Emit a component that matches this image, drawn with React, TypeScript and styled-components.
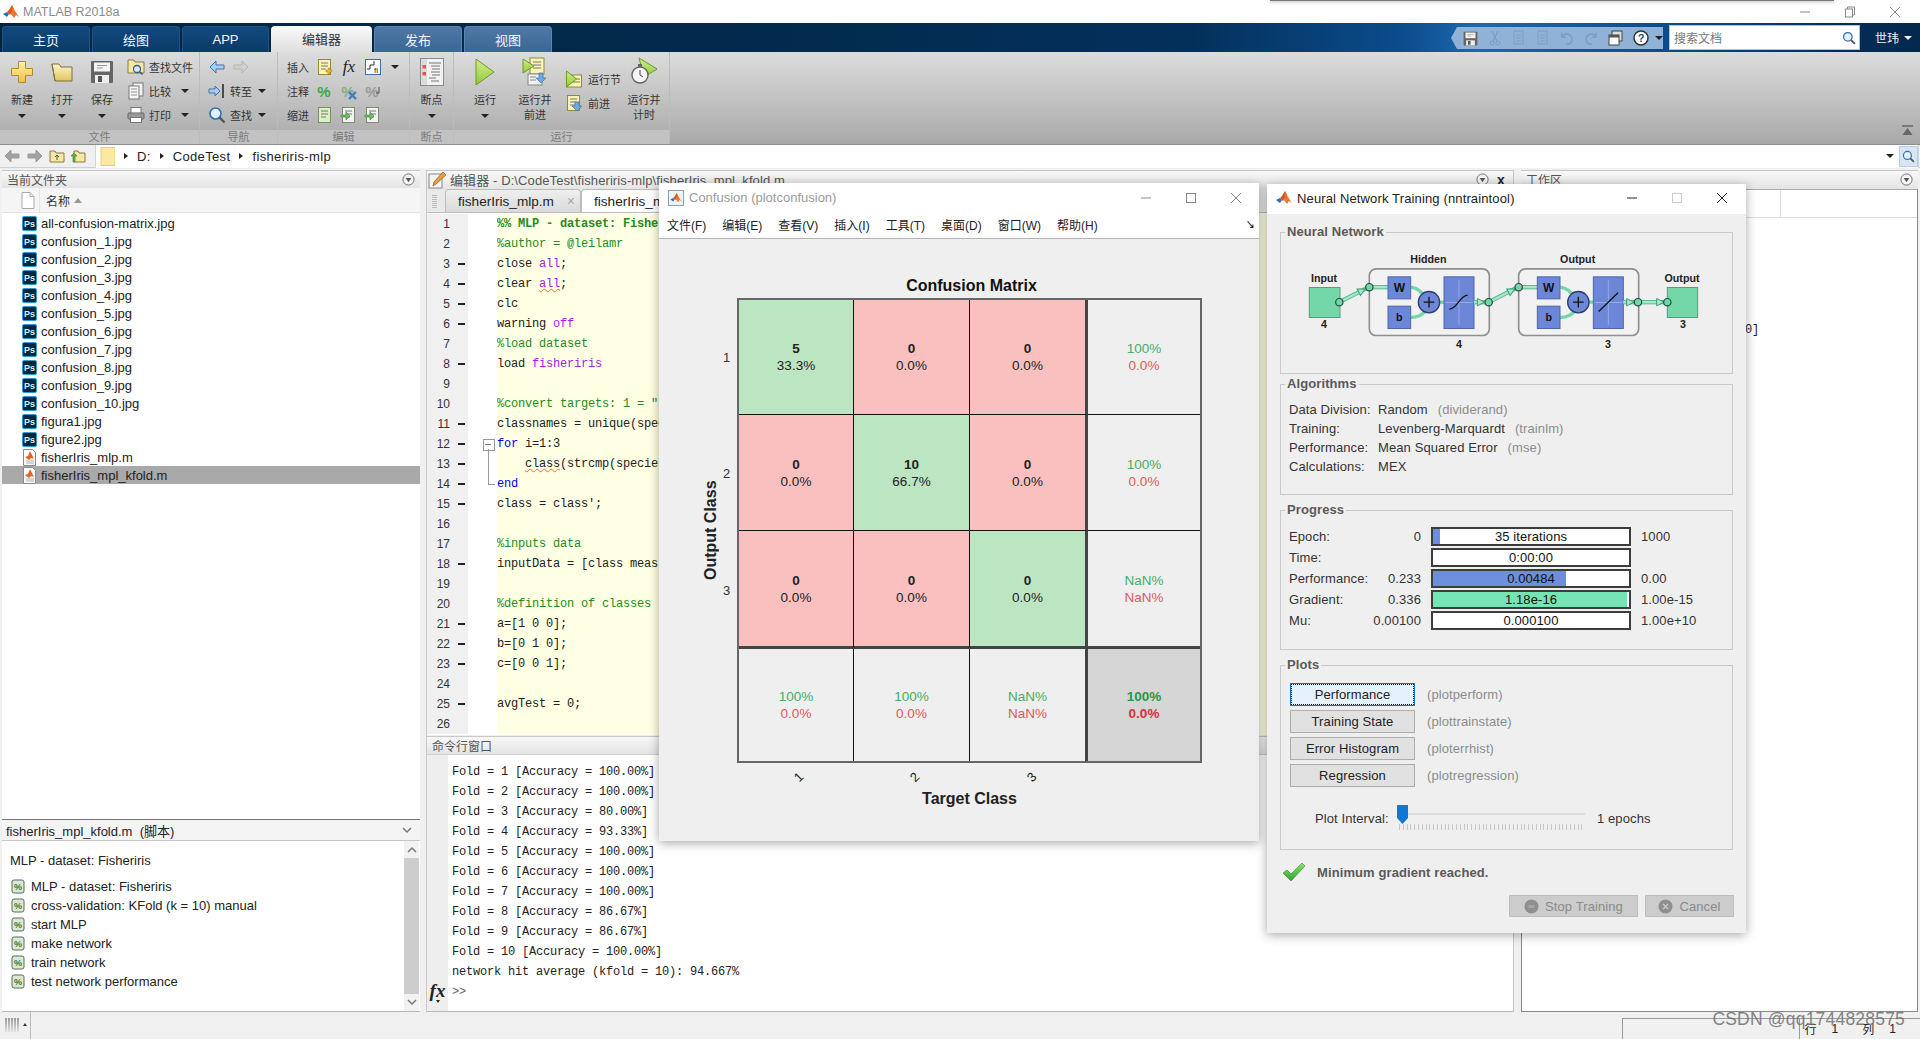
import React from "react";
import styled, { createGlobalStyle, css } from "styled-components";

const SANS = `"Liberation Sans","Noto Sans CJK SC",sans-serif`;
const MONO = `"Liberation Mono","Noto Sans CJK SC",monospace`;

const Global = createGlobalStyle`
  html, body { margin: 0; padding: 0; background: #f0f0f0; }
  body { overflow: hidden; font-family: ${SANS}; font-size: 13px; color: #222; }
  * { box-sizing: border-box; }
`;

const Screen = styled.div`
  position: relative; width: 1920px; height: 1039px; overflow: hidden;
  display: flex; flex-direction: column; background: #f0f0f0;
`;
const Defs = styled.svg`position: absolute; width: 0; height: 0;`;
const TopShade = styled.div`
  position: absolute; left: 1270px; top: 0; width: 564px; height: 1px; background: #777;
  box-shadow: 0 1px 3px rgba(0,0,0,.45);
`;

/* ------- title bar ------- */
const TitleBar = styled.div`
  height: 23px; background: #fff; display: flex; align-items: center; padding-left: 3px; gap: 4px;
`;
const AppName = styled.span`font-size: 12.5px; color: #8a8a8a;`;
const WinCtrls = styled.div`margin-left: auto; display: flex; gap: 33px; padding-right: 19px; align-items: center;`;

/* ------- tabs ------- */
const TabBar = styled.div`
  height: 29px; display: flex; align-items: flex-end; padding-left: 2px; gap: 2px;
  background: linear-gradient(90deg,#02233f 0,#032a4d 38%,#03305a 62%,#0b4c8b 73%,#1c69b0 77%,#0c4f90 86%,#042d58 96%,#03284d 100%);
`;
const Tab = styled.div<{ $w: number; $kind: "dark" | "light" | "active" }>`
  width: ${p => p.$w}px; height: 26px; padding-bottom: 1px;
  border-radius: 4px 4px 0 0; display: flex; align-items: center; justify-content: center; font-size: 13px;
  ${p => p.$kind === "dark" && css`background: linear-gradient(#11497e,#0b3b69); color: #f3f6fa; border: 1px solid #1d5587; border-bottom: 0;`}
  ${p => p.$kind === "light" && css`background: linear-gradient(#4f78a5,#3a6795); color: #f3f6fa; border: 1px solid #5d83ac; border-bottom: 0;`}
  ${p => p.$kind === "active" && css`background: linear-gradient(#fafafa,#dedede); color: #333;`}
`;
const Qat = styled.div`
  margin-left: auto; height: 22px; width: 212px; margin-bottom: 3px; background: #8fb2d6; display: flex; align-items: center;
  padding-left: 12px; gap: 10px; clip-path: polygon(6px 0,100% 0,100% 100%,6px 100%,0 50%);
`;
const QatCaret = styled.span`display: flex; margin-left: -4px;`;
const SearchBox = styled.div`
  width: 191px; height: 25px; margin: 0 0 2px 4px; background: #fff; border: 1px solid #a9c4df; display: flex; align-items: center;
  justify-content: space-between; padding: 0 3px 0 4px; font-size: 12px; color: #777;
`;
const UserMenu = styled.div`
  width: 58px; height: 25px; margin-bottom: 2px; display: flex; align-items: center; padding-left: 13px; gap: 5px; color: #f0f4f8; font-size: 12px;
`;

/* ------- toolstrip ------- */
const Toolstrip = styled.div`
  height: 93px; display: flex; background: linear-gradient(#dcdcdc,#a9a9a9); border-bottom: 1px solid #8d8d8d;
`;
const Section = styled.div<{ $w: number }>`
  width: ${p => p.$w}px; height: 100%; display: flex; flex-direction: column; border-right: 1px solid #bcbcbc;
`;
const SectionBody = styled.div<{ $pl?: number }>`
  height: 78px; display: flex; padding-left: ${p => p.$pl ?? 0}px;
`;
const SectionLabel = styled.div`
  height: 14px; line-height: 14px; text-align: center; font-size: 11px; color: #7b7b7b; background: #c2c2c2;
`;
const EndSection = styled.div`
  flex: 1; display: flex; align-items: flex-end; justify-content: flex-end; padding: 0 7px 8px 0;
`;
const Big = styled.div<{ $w?: number }>`
  width: ${p => p.$w ?? 40}px; display: flex; flex-direction: column; align-items: center; flex: none;
`;
const BigIcon = styled.div`height: 40px; display: flex; align-items: center; justify-content: center;`;
const BigText = styled.div`height: 16px; line-height: 16px; font-size: 11px; color: #333; white-space: nowrap;`;
const BigLast = styled(BigText)`height: 15px; line-height: 15px; display: flex; align-items: center; justify-content: center;`;
const Caret = styled.span<{ $c?: string }>`
  display: inline-block; width: 0; height: 0; flex: none;
  border-left: 4px solid transparent; border-right: 4px solid transparent; border-top: 4px solid ${p => p.$c ?? "#222"};
`;
const SmallCol = styled.div<{ $ml?: number; $pt?: number; $w?: number }>`
  margin-left: ${p => p.$ml ?? 0}px; padding-top: ${p => p.$pt ?? 3}px; width: ${p => p.$w ?? 70}px; flex: none;
`;
const SmallRow = styled.div<{ $gap?: number }>`
  height: 24px; display: flex; align-items: center; gap: ${p => p.$gap ?? 4}px; font-size: 11px; color: #333; white-space: nowrap;
`;
const SmallText = styled.span<{ $w: number }>`display: inline-block; min-width: ${p => p.$w}px;`;
const EditGrid = styled.div`
  padding: 3px 0 0 9px; display: grid; grid-template-columns: 26px 24px 24px 24px 20px; grid-auto-rows: 24px; align-items: center; justify-items: center;
  font-size: 11px; color: #333;
`;
const EditWord = styled.span`justify-self: start; white-space: nowrap;`;

/* ------- address ------- */
const AddressBar = styled.div`
  height: 23px; display: flex; align-items: center; padding: 0 1px 0 3px; background: #f0f0f0; border-bottom: 1px solid #d0d0d0;
`;
const NavIcons = styled.div`display: flex; align-items: center; gap: 5px; width: 92px; flex: none;`;
const PathBox = styled.div`
  flex: 1; height: 23px; background: #fff; border: 1px solid #d5d5d5; border-width: 0 1px; display: flex; align-items: center; padding-left: 4px; gap: 9px;
  font-size: 13px; letter-spacing: .35px; color: #222;
`;
const PathArrow = styled.span`
  width: 0; height: 0; border-top: 3.5px solid transparent; border-bottom: 3.5px solid transparent; border-left: 4px solid #222;
`;
const PathEnd = styled.div`margin-left: auto; display: flex; align-items: center; gap: 5px; height: 100%; `;
const PathSearch = styled.div`
  width: 19px; height: 21px; background: #d8e6f4; border: 1px solid #b8cde2; display: flex; align-items: center; justify-content: center;
`;

/* ------- desk ------- */
const Desk = styled.div`height: 844px; display: flex; padding: 2px 2px 0 2px;`;
const LeftCol = styled.div`width: 418px; display: flex; flex-direction: column; flex: none;`;
const CenterCol = styled.div`width: 1088px; margin-left: 6px; display: flex; flex-direction: column; flex: none; border-left: 1px solid #c8c8c8; border-right: 1px solid #c8c8c8;`;
const RightCol = styled.div`width: 397px; margin-left: 7px; display: flex; flex-direction: column; flex: none;`;

const PanelHead = styled.div<{ $h?: number }>`
  height: ${p => p.$h ?? 18}px; flex: none; display: flex; align-items: center; padding: 0 5px 1px; gap: 6px; font-size: 12px; color: #555;
  background: linear-gradient(#f8f8f8,#e4e4e4); border-top: 1px solid #c8c8c8;
`;
const EditorHead = styled(PanelHead)`padding: 0 8px 2px 1px; gap: 4px; font-size: 13px; letter-spacing: .1px;`;
const HeadRight = styled.div`margin-left: auto; display: flex; align-items: center; gap: 8px;`;
const HeadX = styled.span`font-size: 14px; font-weight: bold; color: #222;`;

const ColumnHead = styled.div`
  height: 25px; flex: none; display: flex; align-items: center; background: #f5f5f5; border-bottom: 1px solid #e3e3e3; font-size: 12px; color: #333;
`;
const ColIcon = styled.div`width: 38px; height: 100%; display: flex; align-items: center; justify-content: flex-end; padding-right: 4px; border-right: 1px solid #e4e4e4; margin-right: 6px;`;
const SortUp = styled.span`
  width: 0; height: 0; margin-left: 4px; border-left: 4px solid transparent; border-right: 4px solid transparent; border-bottom: 5px solid #999;
`;
const FileList = styled.div`height: 606px; flex: none; padding-top: 1px; background: #fff;`;
const FileRow = styled.div<{ $sel?: boolean }>`
  height: 18px; display: flex; align-items: center; padding-left: 20px; gap: 4px; font-size: 13px; color: #222;
  background: ${p => (p.$sel ? "#a9a9a9" : "transparent")};
`;
const DetailHead = styled.div`
  height: 22px; flex: none; display: flex; align-items: center; justify-content: space-between; padding: 0 8px 0 4px; font-size: 13px;
  background: #f4f4f4; border-top: 1px solid #777; border-bottom: 1px solid #c5c5c5;
`;
const Detail = styled.div`flex: 1; display: flex; background: #fff; border-bottom: 1px solid #b8b8b8; min-height: 0;`;
const DetailBody = styled.div`flex: 1; padding: 10px 0 0 8px;`;
const DetailTitle = styled.div`height: 19px; line-height: 19px; font-size: 13px;`;
const OutlineList = styled.div`margin-top: 7px;`;
const OutlineRow = styled.div`height: 19px; display: flex; align-items: center; gap: 5px; padding-left: 1px; font-size: 13px;`;
const ScrollBar = styled.div`width: 15px; margin-right: 1px; display: flex; flex-direction: column; align-items: center; background: #f2f2f2;`;
const ScrollCap = styled.div`height: 17px; display: flex; align-items: center; justify-content: center;`;
const ScrollThumb = styled.div`flex: 1; width: 100%; background: #cdcdcd;`;

/* ------- editor ------- */
const EditorTabs = styled.div`
  height: 23px; flex: none; display: flex; align-items: flex-end; padding-left: 18px; background: #e9e9e9; position: relative;
  border-bottom: 1px solid #bdbdbd;
`;
const Grip = styled.div`
  position: absolute; left: 5px; top: 5px; width: 5px; height: 14px;
  background: repeating-linear-gradient(#bbb 0 1px, transparent 1px 2px);
`;
const EdTab = styled.div<{ $on?: boolean }>`
  height: 23px; width: ${p => (p.$on ? 140 : 136)}px; display: flex; align-items: center; padding-left: 12px;
  font-size: 13.6px; color: #222; border: 1px solid #bbb; border-bottom: 0; border-radius: 4px 4px 0 0; position: relative;
  background: ${p => (p.$on ? "#fff" : "linear-gradient(#efefef,#dadada)")};
`;
const TabClose = styled.span`position: absolute; right: 5px; top: 3px; color: #a8a8a8; font-size: 14px;`;
const Code = styled.div`height: 522px; flex: none; overflow: hidden; background: #fff; position: relative; padding-top: 1px;`;
const CodeBack = styled.div`display: flex; flex-direction: column;`;
const Line = styled.div`
  height: 20px; display: grid; grid-template-columns: 28px 13px 29px 1fr; align-items: center;
`;
const LineNo = styled.div`
  height: 100%; background: #f0f0f0; text-align: right; padding-right: 5px; font: 12px/20px ${SANS}; color: #333;
`;
const LineDash = styled.div`height: 100%; background: #f0f0f0; display: flex; align-items: center; justify-content: center;`;
const DashMark = styled.span`width: 7px; height: 1.5px; background: #222;`;
const FoldCell = styled.div<{ $kind?: "open" | "mid" | "end" }>`
  height: 100%; background: #fff; position: relative;
  ${p => p.$kind === "open" && css`
    &::before { content: ""; position: absolute; left: 15px; top: 5px; width: 10px; height: 10px; border: 1px solid #999; background: #fff; }
    &::after { content: ""; position: absolute; left: 17px; top: 10px; width: 6px; height: 1px; background: #777; }
  `}
  ${p => p.$kind === "mid" && css`&::before { content: ""; position: absolute; left: 20px; top: -5px; bottom: 0; width: 1px; background: #999; }`}
  ${p => p.$kind === "end" && css`&::before { content: ""; position: absolute; left: 20px; top: 0; height: 10px; width: 6px; border-left: 1px solid #999; border-bottom: 1px solid #999; }`}
`;
const CodeText = styled.div`height: 100%; background: #ffffe4;`;
const CodeClip = styled.div`
  width: 162px; height: 100%; overflow: hidden; font: 12px/20px ${MONO}; letter-spacing: -.2px; white-space: pre; color: #222;
`;
const Cmt = styled.span<{ $b?: boolean }>`color: #228b22; font-weight: ${p => (p.$b ? "bold" : "normal")};`;
const Kw = styled.span`color: #0000ff;`;
const Str = styled.span`color: #a020f0;`;
const Warn = styled.span`text-decoration: underline wavy #e8741a 1px;`;

const CmdHead = styled(PanelHead)`margin-top: 1px; padding-left: 5px;`;
const Cmd = styled.div`flex: 1; display: flex; background: #fff; border-bottom: 1px solid #b8b8b8; border-top: 1px solid #d0d0d0;`;
const FxGutter = styled.div`width: 21px; flex: none; background: #eeeeee; display: flex; flex-direction: column; align-items: center; justify-content: flex-end; padding-bottom: 8px;`;
const FxMark = styled.span`font: italic bold 19px/18px "Liberation Serif",serif; color: #222;`;
const FxCaret = styled.span`
  width: 0; height: 0; border-left: 2.5px solid transparent; border-right: 2.5px solid transparent; border-top: 3px solid #222;
`;
const CmdBody = styled.div`flex: 1; padding: 7px 0 0 4px; font: 12px/20px ${MONO}; letter-spacing: -.2px; white-space: pre; color: #222;`;
const Prompt = styled.div`color: #666;`;

/* ------- workspace ------- */
const WsTable = styled.div`flex: 1; background: #fff; border: 1px solid #888; border-top-color: #aaa;`;
const WsHeader = styled.div`height: 28px; display: grid; grid-template-columns: 259px 1fr; border-bottom: 1px solid #ddd;`;
const WsCell = styled.div`border-right: 1px solid #ddd;`;
const WsValue = styled.div`padding: 102px 0 0 223px; font: 12px/20px ${MONO}; letter-spacing: -.2px;`;

/* ------- status ------- */
const StatusBar = styled.div`
  height: 27px; flex: none; display: flex; background: #f0f0f0; align-items: center; position: relative;
`;
const StatusGrip = styled.div`
  width: 31px; height: 100%; margin-right: auto; padding: 6px 0 0 5px; border-right: 1px solid #bbb; display: flex; gap: 1px;
`;
const GripBar = styled.span`width: 2px; height: 14px; background: linear-gradient(#999,#e0e0e0);`;
const GripCaret = styled.span`
  width: 0; height: 0; margin: 5px 0 0 3px; border-left: 2.5px solid transparent; border-right: 2.5px solid transparent; border-bottom: 3px solid #333;
`;
const StatusCells = styled.div`
  width: 298px; height: 21px; margin-top: 6px; display: flex; border-top: 1px solid #999; font-size: 12px;
`;
const StatusSlot = styled.div`width: 181px; height: 100%; border-left: 1px solid #999;`;
const StatusPos = styled.div`
  flex: 1; border-left: 1px solid #999; display: flex; align-items: center; padding: 0 0 1px 5px; color: #222;
`;
const PosVal = styled.span`margin: 0 24px 0 15px;`;
const Watermark = styled.div`
  position: absolute; right: 15px; bottom: 9px; font: 17.5px ${SANS}; color: rgba(110,110,110,.85); letter-spacing: .2px; white-space: nowrap;
`;

/* ------- floating windows ------- */
const Win = styled.div<{ $x: number; $y: number; $w: number; $h: number }>`
  position: absolute; left: ${p => p.$x}px; top: ${p => p.$y}px; width: ${p => p.$w}px; height: ${p => p.$h}px;
  background: #efefef; box-shadow: 0 2px 10px rgba(0,0,0,.35); display: flex; flex-direction: column;
`;
const WinTitle = styled.div<{ $h: number; $dim?: boolean }>`
  height: ${p => p.$h}px; flex: none; background: #fff; display: flex; align-items: center; padding-left: 9px; gap: 5px; font-size: 13px;
  color: ${p => (p.$dim ? "#9a9a9a" : "#222")};
`;
const NnTitle = styled(WinTitle)`padding-bottom: 2px; letter-spacing: .14px;`;
const WinBtns = styled.div<{ $gap: number; $pr: number }>`margin-left: auto; display: flex; align-items: center; gap: ${p => p.$gap}px; padding-right: ${p => p.$pr}px;`;

const MenuBar = styled.div`
  height: 27px; flex: none; background: #fff; border-bottom: 1px solid #b5b5b5; display: flex; align-items: center; padding: 0 0 2px 8px; gap: 16px; font-size: 12px; color: #222;
`;
const MenuEnd = styled.span`margin-left: auto; margin-right: 4px; font-size: 9px; font-weight: bold;`;
const Plot = styled.div`flex: 1; display: flex; flex-direction: column;`;
const PlotTitle = styled.div`
  margin: 37px 0 2px 80px; width: 465px; height: 20px; line-height: 20px; text-align: center; font: bold 16px/20px ${SANS}; color: #111;
`;
const PlotRow = styled.div`display: flex; padding-left: 42px;`;
const YLabel = styled.div`
  width: 20px; writing-mode: vertical-rl; transform: rotate(180deg); text-align: center; font: bold 16px/20px ${SANS}; color: #222;
`;
const YTicks = styled.div`width: 16px; display: grid; grid-template-rows: repeat(4,116.25px);`;
const YTick = styled.div`font-size: 13px; color: #333; padding-top: 52px; text-align: left; padding-left: 2px;`;
const Matrix = styled.div`
  width: 465px; height: 465px; display: grid; grid-template-columns: 115px 116px 118px 112px; grid-template-rows: 115px 116px 118px 112px;
  border: 2px solid #666;
`;
const tones = { good: "#bce5c2", bad: "#f9c0bf", sum: "#efefef", total: "#d6d6d6" } as const;
const Cell = styled.div<{ $tone: keyof typeof tones; $c: number; $r: number }>`
  background: ${p => tones[p.$tone]}; display: flex; flex-direction: column; align-items: center; justify-content: center;
  font-size: 13.5px; line-height: 17px; color: #222;
  border-right: ${p => (p.$c === 3 ? "0" : p.$c === 2 ? "3px solid #444" : "1.5px solid #111")};
  border-bottom: ${p => (p.$r === 3 ? "0" : p.$r === 2 ? "3px solid #444" : "1.5px solid #111")};
`;
const Count = styled.b`font-size: 13.5px;`;
const Hit = styled.span<{ $strong?: boolean }>`color: ${p => (p.$strong ? "#1f9a45" : "#45ad66")}; font-weight: ${p => (p.$strong ? "bold" : "normal")};`;
const Miss = styled.span<{ $strong?: boolean }>`color: ${p => (p.$strong ? "#d8303a" : "#d95a5e")}; font-weight: ${p => (p.$strong ? "bold" : "normal")};`;
const XTicks = styled.div`margin-left: 78px; width: 465px; display: grid; grid-template-columns: 117px 116px 118px 114px; height: 26px; padding-top: 5px;`;
const XTick = styled.div`
  text-align: center; font-size: 13px; line-height: 18px; transform: translateX(4px) rotate(-45deg); color: #222; justify-self: center; width: 16px;
`;
const XLabel = styled.div`margin-left: 78px; width: 465px; text-align: center; font: bold 16px/20px ${SANS}; color: #222;`;

const NnBody = styled.div`flex: 1; padding: 10px 13px 0; display: flex; flex-direction: column; letter-spacing: .1px;`;
const Group = styled.fieldset<{ $h: number; $mt?: number }>`
  margin: ${p => p.$mt ?? 0}px 0 0 0; padding: 0; height: ${p => p.$h}px; min-width: 0; border: 1px solid #c9c9c9; flex: none;
`;
const Legend = styled.legend`margin-left: 4px; padding: 0 2px; font: bold 13px/16px ${SANS}; color: #5a5a5a;`;
const Diagram = styled.svg`display: block;`;
const AlgoGrid = styled.div`
  padding: 8px 0 0 8px; display: grid; grid-template-columns: 89px 1fr; grid-auto-rows: 19px; align-items: center; font-size: 13px; color: #333;
`;
const Note = styled.span`color: #8c8c8c; margin-left: 10px;`;
const ProgList = styled.div`padding-top: 8px;`;
const ProgRow = styled.div`height: 21px; display: flex; align-items: center; padding-left: 8px; font-size: 13px; color: #333;`;
const ProgLabel = styled.div`width: 80px;`;
const ProgStart = styled.div`width: 52px; text-align: right;`;
const ProgBar = styled.div`
  width: 200px; height: 19px; margin: 0 10px; border: 2px solid #3c3c3c; background: #fff; position: relative; color: #111;
`;
const ProgFill = styled.div<{ $green?: boolean }>`height: 100%; background: ${p => (p.$green ? "#76e4b4" : "#6d8ddf")};`;
const ProgText = styled.div`position: absolute; inset: 0; text-align: center; line-height: 15px;`;
const PlotBtns = styled.div`padding: 10px 0 0 9px; display: grid; grid-template-columns: 125px 1fr; grid-auto-rows: 23px; row-gap: 4px; align-items: center;`;
const PlotBtn = styled.div<{ $focus?: boolean }>`
  height: 23px; display: flex; align-items: center; justify-content: center; font-size: 13px; color: #222;
  background: ${p => (p.$focus ? "#e5f1fb" : "#e1e1e1")}; border: 1px solid ${p => (p.$focus ? "#0078d7" : "#adadad")};
  ${p => p.$focus && css`outline: 1px dotted #111; outline-offset: -2px;`}
`;
const PlotNote = styled.span`margin-left: 12px; font-size: 13px; color: #8c8c8c;`;
const SliderRow = styled.div`display: flex; align-items: flex-start; padding: 0 0 0 34px; margin-top: 18px; font-size: 13px; color: #333;`;
const SliderLabel = styled.div`width: 82px; line-height: 28px;`;
const SliderTrack = styled.div`width: 188px; height: 27px; position: relative; margin-right: 12px;`;
const SliderRail = styled.div`position: absolute; left: 0; right: 0; top: 8px; height: 2px; background: #dcdcdc;`;
const SliderThumb = styled.svg`position: absolute; left: 0; top: 0;`;
const SliderTicks = styled.div`
  position: absolute; left: 2px; right: 0; top: 19px; height: 6px;
  background: repeating-linear-gradient(90deg,#c8c8c8 0 1px,transparent 1px 3.8px);
`;
const SliderValue = styled.div`line-height: 28px;`;
const Result = styled.div`margin: 10px 0 0 2px; height: 24px; display: flex; align-items: center; gap: 11px; font: bold 13px ${SANS}; color: #5a5a5a;`;
const Actions = styled.div`margin: 11px -1px 0 0; display: flex; justify-content: flex-end; gap: 7px;`;
const GrayBtn = styled.div<{ $w: number }>`
  width: ${p => p.$w}px; height: 22px; background: #cccccc; border: 1px solid #bdbdbd; display: flex; align-items: center; justify-content: center; gap: 6px;
  font-size: 13px; color: #8a8a8a;
`;

/* ------- icons ------- */
type S = { s?: number };
const PEAK = (
  <>
    <path d="M0 10l4-2 2 2-2 3z" fill="#2a6fb5" />
    <path d="M4 8l2-2 3-5 2 4-4 6-1-1z" fill="#d9541e" />
    <path d="M9 1l3 6 4 6-3-2-2 3-3-4 1-3z" fill="#e8762b" />
  </>
);
const Logo = ({ s = 16 }: S) => <svg width={s} height={s} viewBox="0 0 16 16">{PEAK}</svg>;
const FramedLogo = () => (
  <svg width="16" height="16" viewBox="0 0 16 16">
    <rect x=".5" y=".5" width="15" height="15" fill="#eef3f8" stroke="#8d9fb3" />
    <g transform="translate(2.4 2.4) scale(.7)">{PEAK}</g>
  </svg>
);
const Plus = () => (
  <svg width="24" height="24" viewBox="0 0 24 24"><path d="M8.500 1.500h7v7h7v7h-7v7h-7v-7h-7v-7h7z" fill="url(#gY)" stroke="#b68a28" /></svg>
);
const Folder = ({ s = 24 }: S) => (
  <svg width={s} height={s} viewBox="0 0 24 24"><path d="M2 4h7l2 3h11v14H5z" fill="url(#gF)" stroke="#7f6f3a" /><path d="M2 4l3 17" stroke="#7f6f3a" fill="none" /></svg>
);
const Floppy = ({ s = 24 }: S) => (
  <svg width={s} height={s} viewBox="0 0 24 24"><rect x="1" y="1" width="22" height="22" rx="1" fill="#666" /><rect x="4" y="2.500" width="16" height="9" fill="#f4f4f4" /><path d="M7 5.500h10M7 8h6" stroke="#999" /><rect x="5" y="15" width="14" height="8" fill="#efefef" /><rect x="8" y="16" width="4" height="6" fill="#555" /></svg>
);
const FindFile = () => (
  <svg width="18" height="18" viewBox="0 0 18 18"><path d="M1 2h6l1 2h9v11H1z" fill="#f5e7a6" stroke="#8c7a40" /><circle cx="10" cy="11" r="3.500" fill="#d8ecff" stroke="#355a85" strokeWidth="1.300" /><path d="M12.500 13.500l3 3" stroke="#355a85" strokeWidth="1.600" /></svg>
);
const Compare = () => (
  <svg width="18" height="18" viewBox="0 0 18 18"><rect x="6" y="1" width="10" height="13" fill="#f4f4f4" stroke="#777" /><rect x="2" y="4" width="10" height="13" fill="#fafafa" stroke="#777" /><path d="M4 7h6M4 10h6M4 13h6" stroke="#888" /></svg>
);
const Printer = () => (
  <svg width="18" height="18" viewBox="0 0 18 18"><rect x="4" y="1.500" width="10" height="6" fill="#fafafa" stroke="#777" /><rect x="1" y="7" width="16" height="6" rx="1" fill="#9a9a9a" stroke="#666" /><rect x="3.500" y="11.500" width="11" height="5" fill="#fff" stroke="#777" /></svg>
);
type Arrow = { on?: boolean; s?: number; dark?: boolean };
const ArrowFill = (on?: boolean, dark?: boolean) => (dark ? "#a2a2a2" : on ? "#a8cdf0" : "#cfcfcf");
const ArrowLine = (on?: boolean, dark?: boolean) => (dark ? "#9a9a9a" : on ? "#3d75ad" : "#b5b5b5");
const ArrowL = ({ on = true, s = 18, dark }: Arrow) => (
  <svg width={s} height={s} viewBox="0 0 18 18"><path d="M8 3L2 9l6 6v-4h8V7H8z" fill={ArrowFill(on, dark)} stroke={ArrowLine(on, dark)} /></svg>
);
const ArrowR = ({ on = false, s = 18, dark }: Arrow) => (
  <svg width={s} height={s} viewBox="0 0 18 18"><path d="M10 3l6 6-6 6v-4H2V7h8z" fill={ArrowFill(on, dark)} stroke={ArrowLine(on, dark)} /></svg>
);
const GoTo = () => (
  <svg width="18" height="18" viewBox="0 0 18 18"><path d="M7 4l5 5-5 5v-3H1V7h6z" fill="#a8cdf0" stroke="#3d75ad" /><path d="M15 2v14" stroke="#222" strokeWidth="1.500" /></svg>
);
const Glass = ({ s = 18, c = "#2f6fb0" }: { s?: number; c?: string }) => (
  <svg width={s} height={s} viewBox="0 0 18 18"><circle cx="7.500" cy="7.500" r="5.500" fill="#e2f1ff" stroke={c} strokeWidth="1.600" /><path d="M11.500 11.500l5 5" stroke="#555" strokeWidth="2.400" /></svg>
);
const Doc = ({ fill = "#fbf3b5", stroke = "#8c8c3a" }: { fill?: string; stroke?: string }) => (
  <><rect x="2.500" y="1.500" width="12" height="15" fill={fill} stroke={stroke} /><path d="M5 5h7M5 8h7M5 11h5" stroke="#777" /></>
);
const InsertDoc = () => (
  <svg width="18" height="18" viewBox="0 0 18 18"><Doc /><path d="M12 10h2v2h2v2h-2v2h-2v-2h-2v-2h2z" fill="#f2b431" stroke="#b27f1c" strokeWidth=".5" /></svg>
);
const FxIcon = () => (<svg width="22" height="18" viewBox="0 0 22 18"><text x="11" y="14" textAnchor="middle" fontFamily="Liberation Serif" fontStyle="italic" fontSize="17" fill="#222">fx</text></svg>);
const FiIcon = () => (
  <svg width="18" height="18" viewBox="0 0 18 18"><rect x="1.500" y="1.500" width="15" height="15" fill="#fff" stroke="#3f6ea5" /><path d="M3 11h3V7h4V3" fill="none" stroke="#333" /><text x="12" y="15" fontFamily="Liberation Sans" fontSize="8" textAnchor="middle" fill="#222">fi</text></svg>
);
const Pct = ({ c = "#3da83c", mark }: { c?: string; mark?: "x" | "arrow" }) => (
  <svg width="18" height="18" viewBox="0 0 18 18"><text x="8" y="15" fontFamily="Liberation Sans" fontWeight="bold" fontSize="15" textAnchor="middle" fill={c}>%</text>
    {mark === "x" && <path d="M9 10l7 7M16 10l-7 7" stroke="#3d7cc0" strokeWidth="2.200" />}
    {mark === "arrow" && <path d="M15 5v6h-3" fill="none" stroke="#555" />}
  </svg>
);
const IndentDoc = ({ tone, arrow }: { tone: string; arrow?: boolean }) => (
  <svg width="18" height="18" viewBox="0 0 18 18"><Doc fill={tone} stroke="#7d8d6a" />{arrow && <path d="M1 9h5V6l4 4-4 4v-3H1z" fill="#69c15c" stroke="#3c8a35" strokeWidth=".6" />}</svg>
);
const BreakIcon = () => (
  <svg width="24" height="28" viewBox="0 0 24 28"><rect x=".5" y=".5" width="23" height="27" fill="#f2f2f2" stroke="#8a8a8a" /><rect x="1" y="1" width="6" height="26" fill="#dcdcdc" /><rect x="2.500" y="7" width="3.500" height="3.500" fill="#e25555" /><rect x="2.500" y="14" width="3.500" height="3.500" fill="#e25555" /><path d="M9 5h12M11 8h9M12 11h8M11 14h9M12 17h8M9 20h7M11 23h8" stroke="#777" /></svg>
);
const RunIcon = () => (
  <svg width="22" height="30" viewBox="0 0 22 30"><path d="M2 2l18 13L2 28z" fill="url(#gG)" stroke="#6c9b25" /></svg>
);
const RunAdvance = () => (
  <svg width="26" height="30" viewBox="0 0 26 30"><rect x="8" y="1" width="14" height="16" fill="#fbf3b5" stroke="#8c8c3a" /><path d="M11 5h8M11 8h8M11 11h8" stroke="#777" /><path d="M1 2l11 7-11 7z" fill="url(#gG)" stroke="#6c9b25" /><rect x="6" y="17" width="14" height="11" fill="#f2f2f2" stroke="#888" /><path d="M8 20h6M8 23h6" stroke="#888" /><path d="M17 16h4v5h3l-5 5-5-5h3z" fill="#6fa9de" stroke="#3c74ab" strokeWidth=".7" /></svg>
);
const RunSection = () => (
  <svg width="18" height="18" viewBox="0 0 18 18"><rect x="1.500" y="5" width="15" height="12" fill="#fbf3b5" stroke="#8c8c3a" /><path d="M7 9h8M7 12h8" stroke="#777" /><path d="M1.500 1l10 8-10 8z" fill="url(#gG)" stroke="#6c9b25" /></svg>
);
const Advance = () => (
  <svg width="18" height="18" viewBox="0 0 18 18"><Doc /><path d="M10 8h4v4h3l-5 5-5-5h3z" fill="#6fa9de" stroke="#3c74ab" strokeWidth=".7" /></svg>
);
const RunTimed = () => (
  <svg width="28" height="30" viewBox="0 0 28 30"><path d="M9 1l18 11-13 8z" fill="url(#gG)" stroke="#6c9b25" /><circle cx="10" cy="18" r="8" fill="#f5f5f5" stroke="#666" strokeWidth="1.400" /><path d="M10 13v5l3 2" fill="none" stroke="#444" /><rect x="8" y="7" width="4" height="3" fill="#666" /></svg>
);
const MiniFloppy = () => <Floppy s={15} />;
const MiniDoc = ({ c = "#7a9fc4" }: { c?: string }) => (
  <svg width="14" height="16" viewBox="0 0 14 16"><rect x="2" y="1" width="9" height="13" fill="none" stroke={c} /><path d="M4 5h5M4 8h5M4 11h5" stroke={c} /></svg>
);
const Scissors = () => (
  <svg width="14" height="16" viewBox="0 0 14 16"><path d="M4 1l5 10M10 1L5 11" stroke="#7a9fc4" strokeWidth="1.300" /><circle cx="4" cy="13" r="2" fill="none" stroke="#7a9fc4" /><circle cx="10" cy="13" r="2" fill="none" stroke="#7a9fc4" /></svg>
);
const UndoIcon = ({ flip }: { flip?: boolean }) => (
  <svg width="14" height="16" viewBox="0 0 14 16" transform={flip ? "scale(-1,1)" : undefined}><path d="M3 6a5 5 0 1 1 3 8" fill="none" stroke="#7a9fc4" strokeWidth="1.600" /><path d="M1 2v6h6z" fill="#7a9fc4" /></svg>
);
const WindowsIcon = () => (
  <svg width="15" height="16" viewBox="0 0 15 16"><rect x="4" y="1" width="10" height="10" fill="#ddd" stroke="#444" /><rect x="1" y="5" width="10" height="10" fill="#fff" stroke="#444" /><rect x="1" y="5" width="10" height="2.500" fill="#555" /></svg>
);
const HelpIcon = () => (
  <svg width="16" height="16" viewBox="0 0 16 16"><circle cx="8" cy="8" r="7" fill="#fff" stroke="#333" strokeWidth="1.500" /><text x="8" y="12" textAnchor="middle" fontFamily="Liberation Sans" fontWeight="bold" fontSize="11" fill="#25507f">?</text></svg>
);
const UpFolder = () => (
  <svg width="16" height="16" viewBox="0 0 16 16"><path d="M1 3h5l1 2h8v9H1z" fill="#f5e7a6" stroke="#8c7a40" /><path d="M8 7v5M6 9l2-2 2 2" fill="none" stroke="#555" /></svg>
);
const BrowseFolder = () => (
  <svg width="16" height="16" viewBox="0 0 16 16"><path d="M4 3h4l1 2h6v9H4z" fill="#f5e7a6" stroke="#8c7a40" /><path d="M1 8l3-3 3 3H5v6H3V8z" fill="#5fb14e" stroke="#2f7d2a" strokeWidth=".6" /></svg>
);
const PathFolder = () => (
  <svg width="15" height="23" viewBox="0 0 15 23"><rect x="1" y="2.500" width="14" height="18" fill="#fbe9a2" stroke="#e5cd7a" /></svg>
);
const Circled = ({ s = 13 }: S) => (
  <svg width={s} height={s} viewBox="0 0 14 14"><circle cx="7" cy="7" r="6" fill="#f5f5f5" stroke="#666" /><path d="M4 5.500h6L7 10z" fill="#555" /></svg>
);
const PageIcon = () => (
  <svg width="14" height="17" viewBox="0 0 14 17"><path d="M1 .5h8l4 4v12H1z" fill="#fff" stroke="#aaa" /><path d="M9 .5v4h4" fill="none" stroke="#aaa" /></svg>
);
const PsIcon = () => (
  <svg width="15" height="15" viewBox="0 0 15 15"><rect x=".5" y=".5" width="14" height="14" rx="1.500" fill="#04263f" stroke="#2f9ed8" /><text x="7.500" y="11" textAnchor="middle" fontFamily="Liberation Sans" fontWeight="bold" fontSize="9" fill="#d8eefc">Ps</text></svg>
);
const MFile = () => (
  <svg width="15" height="17" viewBox="0 0 15 17"><path d="M1.500 .5h9l3 3v13h-12z" fill="#fff" stroke="#888" /><path d="M3 8l3-1 2-5 4 8-3-1-2 2z" fill="#e0642a" /><path d="M4 12h8M4 14h8" stroke="#aaa" /></svg>
);
const Pencil = () => (
  <svg width="18" height="18" viewBox="0 0 18 18"><rect x="1" y="3" width="13" height="14" fill="#f4f4f4" stroke="#888" /><path d="M5 15l1-4 9-10 3 3-10 9z" fill="#e8a03a" stroke="#8a5a20" strokeWidth=".7" /></svg>
);
const OutlineIcon = () => (
  <svg width="15" height="15" viewBox="0 0 15 15"><rect x="1" y="1" width="12" height="13" rx="2" fill="#dbe8d8" stroke="#5a6d5a" /><text x="7" y="11" textAnchor="middle" fontFamily="Liberation Sans" fontWeight="bold" fontSize="9" fill="#2e7d32">%</text></svg>
);
const Min = ({ c = "#888" }: { c?: string }) => (<svg width="12" height="12" viewBox="0 0 12 12"><path d="M1 6h10" stroke={c} /></svg>);
const Max = ({ c = "#888" }: { c?: string }) => (<svg width="12" height="12" viewBox="0 0 12 12"><rect x="1.500" y="1.500" width="9" height="9" fill="none" stroke={c} /></svg>);
const Restore = ({ c = "#888" }: { c?: string }) => (<svg width="12" height="12" viewBox="0 0 12 12"><path d="M3.500 3V1h7v8h-2" fill="none" stroke={c} /><rect x="1.500" y="3" width="7" height="8" fill="none" stroke={c} /></svg>);
const Cross = ({ c = "#888" }: { c?: string }) => (<svg width="12" height="12" viewBox="0 0 12 12"><path d="M1 1l10 10M11 1L1 11" stroke={c} /></svg>);
const Chevron = ({ up }: { up?: boolean }) => (
  <svg width="10" height="7" viewBox="0 0 10 7"><path d={up ? "M1 6l4-4 4 4" : "M1 1l4 4 4-4"} fill="none" stroke="#777" strokeWidth="1.500" /></svg>
);
const CheckMark = () => (
  <svg width="24" height="20" viewBox="0 0 24 20"><path d="M1 11l4-3 4 4L20 1l3 3L9 19z" fill="url(#gC)" stroke="#2c8a2c" strokeWidth=".6" /></svg>
);
const DiskBtn = ({ mark }: { mark: "stop" | "x" }) => (
  <svg width="15" height="15" viewBox="0 0 15 15"><circle cx="7.500" cy="7.500" r="7" fill="#8f8f8f" />
    {mark === "x" ? <path d="M5 5l5 5M10 5l-5 5" stroke="#c8c8c8" strokeWidth="1.500" /> : <rect x="4.500" y="6" width="6" height="3" fill="#a5a5a5" />}
  </svg>
);
const Collapse = () => (
  <svg width="11" height="11" viewBox="0 0 11 11"><path d="M0 1h11" stroke="#666" strokeWidth="1.500" /><path d="M5.500 3l5 7H.5z" fill="#666" /></svg>
);

const NN_BLUE = "#6d87d8", NN_GREEN = "#73d7a8";
const NnLink = ({ d }: { d: string }) => (
  <><path d={d} fill="none" stroke="#5dbb94" strokeWidth="13" /><path d={d} fill="none" stroke="#a6e6c9" strokeWidth="7" /></>
);
const Tip = ({ x, y, r = 0 }: { x: number; y: number; r?: number }) => (
  <path d="M-22 -11L0 0L-22 11z" transform={`translate(${x} ${y}) rotate(${r})`} fill="#a6e6c9" stroke="#3f9d78" strokeWidth="3" />
);
const Node = ({ x, y }: { x: number; y: number }) => <circle cx={x} cy={y} r="11" fill={NN_GREEN} stroke="#23493a" strokeWidth="3.500" />;
const Label = ({ x, y, t }: { x: number; y: number; t: string }) => (
  <text x={x} y={y} textAnchor="middle" fontFamily="Liberation Sans" fontWeight="bold" fontSize="32" fill="#222">{t}</text>
);
const Layer = ({ x, ramp }: { x: number; ramp: boolean }) => (
  <g>
    <rect x={x} y="266" width="360" height="200" rx="20" fill="#f2f2f2" stroke="#8f8f8f" strokeWidth="5" />
    <NnLink d={`M${x} 321h56`} />
    <path d={`M${x + 124} 321q30 4 40 30`} fill="none" stroke="#73d7a8" strokeWidth="10" />
    <path d={`M${x + 124} 412q30 0 45 -20`} fill="none" stroke="#73d7a8" strokeWidth="10" />
    <rect x={x + 56} y="290" width="68" height="66" fill={NN_BLUE} stroke="#4d65ad" strokeWidth="3" />
    <rect x={x + 56} y="378" width="68" height="67" fill={NN_BLUE} stroke="#4d65ad" strokeWidth="3" />
    <text x={x + 90} y="335" textAnchor="middle" fontFamily="Liberation Sans" fontWeight="bold" fontSize="36" fill="#111">W</text>
    <text x={x + 90} y="424" textAnchor="middle" fontFamily="Liberation Sans" fontWeight="bold" fontSize="32" fill="#111">b</text>
    <path d={`M${x + 205} 366h20`} stroke="#73d7a8" strokeWidth="10" />
    <circle cx={x + 179} cy="366" r="32" fill={NN_BLUE} stroke="#2e3f70" strokeWidth="4" />
    <path d={`M${x + 163} 366h32M${x + 179} 350v32`} stroke="#111" strokeWidth="4" />
    <rect x={x + 224} y="290" width="90" height="155" fill={NN_BLUE} stroke="#4d65ad" strokeWidth="3" />
    <path d={`M${x + 228} 367h82M${x + 269} 300v134`} stroke="#a9b9ea" strokeWidth="2" />
    {ramp
      ? <path d={`M${x + 240} 387c25 -2 30 -40 55 -42`} fill="none" stroke="#111" strokeWidth="4" />
      : <path d={`M${x + 240} 394l58 -56`} fill="none" stroke="#111" strokeWidth="4" />}
    <NnLink d={`M${x + 314} 366h44`} />
    <Tip x={x + 346} y={366} />
  </g>
);

const NnDiagram = () => (
  <Diagram width="451" height="133" viewBox="33 180 1353 398">
    <Label x={162} y={306} t="Input" /><Label x={475} y={248} t="Hidden" /><Label x={923} y={248} t="Output" /><Label x={1236} y={306} t="Output" />
    <rect x="118" y="322" width="92" height="90" fill={NN_GREEN} stroke="#5a9c80" strokeWidth="3" />
    <NnLink d="M208 366L296 321" />
    <Tip x={286} y={326} r={-27} />
    <Layer x={298} ramp />
    <NnLink d="M656 366L744 321" />
    <Tip x={735} y={326} r={-27} />
    <Layer x={746} ramp={false} />
    <NnLink d="M1104 366h88" />
    <Tip x={1182} y={366} />
    <rect x="1192" y="322" width="91" height="90" fill={NN_GREEN} stroke="#5a9c80" strokeWidth="3" />
    <Node x={208} y={366} /><Node x={298} y={321} /><Node x={656} y={366} /><Node x={746} y={321} /><Node x={1104} y={366} /><Node x={1192} y={366} />
    <Label x={162} y={443} t="4" /><Label x={567} y={503} t="4" /><Label x={1014} y={503} t="3" /><Label x={1239} y={443} t="3" />
  </Diagram>
);

/* ------- data ------- */
const files = ["all-confusion-matrix.jpg", ...Array.from({ length: 10 }, (_, i) => `confusion_${i + 1}.jpg`), "figura1.jpg", "figure2.jpg"];
const outline = ["MLP - dataset: Fisheriris", "cross-validation: KFold (k = 10) manual", "start MLP", "make network", "train network", "test network performance"];
const code: { d?: boolean; f?: "open" | "mid" | "end"; t: React.ReactNode }[] = [
  { t: <Cmt $b>%% MLP - dataset: Fisheriris</Cmt> },
  { t: <Cmt>%author = @leilamr</Cmt> },
  { d: true, t: <>close <Str>all</Str>;</> },
  { d: true, t: <>clear <Warn><Str>all</Str></Warn>;</> },
  { d: true, t: "clc" },
  { d: true, t: <>warning <Str>off</Str></> },
  { t: <Cmt>%load dataset</Cmt> },
  { d: true, t: <>load <Str>fisheriris</Str></> },
  { t: "" },
  { t: <Cmt>%convert targets: 1 = "setosa"</Cmt> },
  { d: true, t: "classnames = unique(species);" },
  { d: true, f: "open", t: <><Kw>for</Kw> i=1:3</> },
  { d: true, f: "mid", t: <>    <Warn>class</Warn>(strcmp(species,classnames{"{i}"})) = i;</> },
  { d: true, f: "end", t: <Kw>end</Kw> },
  { d: true, t: "class = class';" },
  { t: "" },
  { t: <Cmt>%inputs data</Cmt> },
  { d: true, t: "inputData = [class meas];" },
  { t: "" },
  { t: <Cmt>%definition of classes</Cmt> },
  { d: true, t: "a=[1 0 0];" },
  { d: true, t: "b=[0 1 0];" },
  { d: true, t: "c=[0 0 1];" },
  { t: "" },
  { d: true, t: "avgTest = 0;" },
  { t: "" },
];
const folds = ["100.00", "100.00", "80.00", "93.33", "100.00", "100.00", "100.00", "86.67", "86.67", "100.00"];

type Kind = "good" | "bad";
const matrix: { n: string; p: string; k: Kind }[][] = [
  [{ n: "5", p: "33.3%", k: "good" }, { n: "0", p: "0.0%", k: "bad" }, { n: "0", p: "0.0%", k: "bad" }],
  [{ n: "0", p: "0.0%", k: "bad" }, { n: "10", p: "66.7%", k: "good" }, { n: "0", p: "0.0%", k: "bad" }],
  [{ n: "0", p: "0.0%", k: "bad" }, { n: "0", p: "0.0%", k: "bad" }, { n: "0", p: "0.0%", k: "good" }],
];
const rowSum = [["100%", "0.0%"], ["100%", "0.0%"], ["NaN%", "NaN%"]];
const colSum = [["100%", "0.0%"], ["100%", "0.0%"], ["NaN%", "NaN%"]];
const menus = ["文件(F)", "编辑(E)", "查看(V)", "插入(I)", "工具(T)", "桌面(D)", "窗口(W)", "帮助(H)"];

const ConfusionWindow = () => (
  <Win $x={659} $y={183} $w={600} $h={658}>
    <WinTitle $h={29} $dim>
      <FramedLogo /><span>Confusion (plotconfusion)</span>
      <WinBtns $gap={33} $pr={17}><Min /><Max /><Cross /></WinBtns>
    </WinTitle>
    <MenuBar>{menus.map(m => <span key={m}>{m}</span>)}<MenuEnd>↘</MenuEnd></MenuBar>
    <Plot>
      <PlotTitle>Confusion Matrix</PlotTitle>
      <PlotRow>
        <YLabel>Output Class</YLabel>
        <YTicks>{["1", "2", "3", ""].map((t, i) => <YTick key={i}>{t}</YTick>)}</YTicks>
        <Matrix>
          {matrix.map((row, r) => (
            <React.Fragment key={r}>
              {row.map((c, i) => (
                <Cell key={i} $tone={c.k} $c={i} $r={r}><Count>{c.n}</Count><span>{c.p}</span></Cell>
              ))}
              <Cell $tone="sum" $c={3} $r={r}><Hit>{rowSum[r][0]}</Hit><Miss>{rowSum[r][1]}</Miss></Cell>
            </React.Fragment>
          ))}
          {colSum.map((c, i) => (
            <Cell key={i} $tone="sum" $c={i} $r={3}><Hit>{c[0]}</Hit><Miss>{c[1]}</Miss></Cell>
          ))}
          <Cell $tone="total" $c={3} $r={3}><Hit $strong>100%</Hit><Miss $strong>0.0%</Miss></Cell>
        </Matrix>
      </PlotRow>
      <XTicks>{["1", "2", "3"].map(t => <XTick key={t}>{t}</XTick>)}</XTicks>
      <XLabel>Target Class</XLabel>
    </Plot>
  </Win>
);

const TrainingWindow = () => (
  <Win $x={1267} $y={184} $w={479} $h={749}>
    <NnTitle $h={30}>
      <Logo s={16} /><span>Neural Network Training (nntraintool)</span>
      <WinBtns $gap={33} $pr={18}><Min c="#222" /><Max c="#ccc" /><Cross c="#222" /></WinBtns>
    </NnTitle>
    <NnBody>
      <Group $h={150}>
        <Legend>Neural Network</Legend>
        <NnDiagram />
      </Group>
      <Group $h={119} $mt={2}>
        <Legend>Algorithms</Legend>
        <AlgoGrid>
          <span>Data Division:</span><span>Random<Note>(dividerand)</Note></span>
          <span>Training:</span><span>Levenberg-Marquardt<Note>(trainlm)</Note></span>
          <span>Performance:</span><span>Mean Squared Error<Note>(mse)</Note></span>
          <span>Calculations:</span><span>MEX</span>
        </AlgoGrid>
      </Group>
      <Group $h={148} $mt={7}>
        <Legend>Progress</Legend>
        <ProgList>
          {[
            { l: "Epoch:", s: "0", t: "35 iterations", e: "1000", w: 3.5 },
            { l: "Time:", s: "", t: "0:00:00", e: "", w: 0 },
            { l: "Performance:", s: "0.233", t: "0.00484", e: "0.00", w: 68 },
            { l: "Gradient:", s: "0.336", t: "1.18e-16", e: "1.00e-15", w: 99, g: true },
            { l: "Mu:", s: "0.00100", t: "0.000100", e: "1.00e+10", w: 0 },
          ].map(r => (
            <ProgRow key={r.l}>
              <ProgLabel>{r.l}</ProgLabel><ProgStart>{r.s}</ProgStart>
              <ProgBar><ProgFill $green={r.g} style={{ width: `${r.w}%` }} /><ProgText>{r.t}</ProgText></ProgBar>
              <span>{r.e}</span>
            </ProgRow>
          ))}
        </ProgList>
      </Group>
      <Group $h={193} $mt={7}>
        <Legend>Plots</Legend>
        <PlotBtns>
          <PlotBtn $focus>Performance</PlotBtn><PlotNote>(plotperform)</PlotNote>
          <PlotBtn>Training State</PlotBtn><PlotNote>(plottrainstate)</PlotNote>
          <PlotBtn>Error Histogram</PlotBtn><PlotNote>(ploterrhist)</PlotNote>
          <PlotBtn>Regression</PlotBtn><PlotNote>(plotregression)</PlotNote>
        </PlotBtns>
        <SliderRow>
          <SliderLabel>Plot Interval:</SliderLabel>
          <SliderTrack>
            <SliderRail /><SliderTicks />
            <SliderThumb width="11" height="19" viewBox="0 0 11 19"><path d="M0 0h11v13l-5.500 6L0 13z" fill="#0f78d4" /></SliderThumb>
          </SliderTrack>
          <SliderValue>1 epochs</SliderValue>
        </SliderRow>
      </Group>
      <Result><CheckMark /><span>Minimum gradient reached.</span></Result>
      <Actions>
        <GrayBtn $w={129}><DiskBtn mark="stop" />Stop Training</GrayBtn>
        <GrayBtn $w={89}><DiskBtn mark="x" />Cancel</GrayBtn>
      </Actions>
    </NnBody>
  </Win>
);

export default function App() {
  return (
    <Screen>
      <Global />
      <Defs>
        <defs>
          <linearGradient id="gY" x1="0" y1="0" x2="0" y2="1"><stop offset="0" stopColor="#fff2a8" /><stop offset="1" stopColor="#f0c040" /></linearGradient>
          <linearGradient id="gF" x1="0" y1="0" x2="0" y2="1"><stop offset="0" stopColor="#fdf6c8" /><stop offset="1" stopColor="#e2c35f" /></linearGradient>
          <linearGradient id="gG" x1="0" y1="0" x2="0" y2="1"><stop offset="0" stopColor="#d3ec8a" /><stop offset="1" stopColor="#8fca3c" /></linearGradient>
          <linearGradient id="gC" x1="0" y1="0" x2="0" y2="1"><stop offset="0" stopColor="#8de36f" /><stop offset="1" stopColor="#2aa52f" /></linearGradient>
        </defs>
      </Defs>
      <TitleBar>
        <Logo /><AppName>MATLAB R2018a</AppName>
        <WinCtrls><Min /><Restore /><Cross /></WinCtrls>
      </TitleBar>
      <TabBar>
        <Tab $w={88} $kind="dark">主页</Tab>
        <Tab $w={88} $kind="dark">绘图</Tab>
        <Tab $w={87} $kind="dark">APP</Tab>
        <Tab $w={101} $kind="active">编辑器</Tab>
        <Tab $w={88} $kind="light">发布</Tab>
        <Tab $w={88} $kind="light">视图</Tab>
        <Qat>
          <MiniFloppy /><Scissors /><MiniDoc /><MiniDoc /><UndoIcon /><UndoIcon flip /><WindowsIcon /><HelpIcon /><QatCaret><Caret /></QatCaret>
        </Qat>
        <SearchBox>搜索文档<Glass s={14} /></SearchBox>
        <UserMenu>世玮<Caret $c="#f0f4f8" /></UserMenu>
      </TabBar>
      <Toolstrip>
        <Section $w={200}>
          <SectionBody $pl={2}>
            <Big><BigIcon><Plus /></BigIcon><BigText>新建</BigText><BigLast><Caret /></BigLast></Big>
            <Big><BigIcon><Folder /></BigIcon><BigText>打开</BigText><BigLast><Caret /></BigLast></Big>
            <Big><BigIcon><Floppy /></BigIcon><BigText>保存</BigText><BigLast><Caret /></BigLast></Big>
            <SmallCol $ml={5} $w={72}>
              <SmallRow><FindFile />查找文件</SmallRow>
              <SmallRow><Compare /><SmallText $w={28}>比较</SmallText><Caret /></SmallRow>
              <SmallRow><Printer /><SmallText $w={28}>打印</SmallText><Caret /></SmallRow>
            </SmallCol>
          </SectionBody>
          <SectionLabel>文件</SectionLabel>
        </Section>
        <Section $w={78}>
          <SectionBody $pl={8}>
            <SmallCol>
              <SmallRow $gap={6}><ArrowL /><ArrowR /></SmallRow>
              <SmallRow><GoTo /><SmallText $w={24}>转至</SmallText><Caret /></SmallRow>
              <SmallRow><Glass /><SmallText $w={24}>查找</SmallText><Caret /></SmallRow>
            </SmallCol>
          </SectionBody>
          <SectionLabel>导航</SectionLabel>
        </Section>
        <Section $w={132}>
          <SectionBody>
            <EditGrid>
              <EditWord>插入</EditWord><InsertDoc /><FxIcon /><FiIcon /><Caret />
              <EditWord>注释</EditWord><Pct /><Pct c="#7fb07d" mark="x" /><Pct c="#9a9a9a" mark="arrow" /><span />
              <EditWord>缩进</EditWord><IndentDoc tone="#d9f0c2" /><IndentDoc tone="#f2f2f2" arrow /><IndentDoc tone="#f2f2f2" arrow />
            </EditGrid>
          </SectionBody>
          <SectionLabel>编辑</SectionLabel>
        </Section>
        <Section $w={44}>
          <SectionBody>
            <Big $w={43}><BigIcon><BreakIcon /></BigIcon><BigText>断点</BigText><BigLast><Caret /></BigLast></Big>
          </SectionBody>
          <SectionLabel>断点</SectionLabel>
        </Section>
        <Section $w={216}>
          <SectionBody $pl={11}>
            <Big><BigIcon><RunIcon /></BigIcon><BigText>运行</BigText><BigLast><Caret /></BigLast></Big>
            <Big $w={60}><BigIcon><RunAdvance /></BigIcon><BigText>运行并</BigText><BigLast>前进</BigLast></Big>
            <SmallCol $pt={15} $w={60}>
              <SmallRow $gap={5}><RunSection />运行节</SmallRow>
              <SmallRow $gap={5}><Advance />前进</SmallRow>
            </SmallCol>
            <Big $w={38}><BigIcon><RunTimed /></BigIcon><BigText>运行并</BigText><BigLast>计时</BigLast></Big>
          </SectionBody>
          <SectionLabel>运行</SectionLabel>
        </Section>
        <EndSection><Collapse /></EndSection>
      </Toolstrip>
      <AddressBar>
        <NavIcons><ArrowL dark /><ArrowR dark /><UpFolder /><BrowseFolder /></NavIcons>
        <PathBox>
          <PathFolder /><PathArrow /><span>D:</span><PathArrow /><span>CodeTest</span><PathArrow /><span>fisheriris-mlp</span>
          <PathEnd><Caret /><PathSearch><Glass s={13} /></PathSearch></PathEnd>
        </PathBox>
      </AddressBar>
      <Desk>
        <LeftCol>
          <PanelHead>当前文件夹<HeadRight><Circled /></HeadRight></PanelHead>
          <ColumnHead><ColIcon><PageIcon /></ColIcon>名称<SortUp /></ColumnHead>
          <FileList>
            {files.map(f => <FileRow key={f}><PsIcon />{f}</FileRow>)}
            <FileRow><MFile />fisherIris_mlp.m</FileRow>
            <FileRow $sel><MFile />fisherIris_mpl_kfold.m</FileRow>
          </FileList>
          <DetailHead><span>fisherIris_mpl_kfold.m&nbsp;&nbsp;(脚本)</span><Chevron /></DetailHead>
          <Detail>
            <DetailBody>
              <DetailTitle>MLP - dataset: Fisheriris</DetailTitle>
              <OutlineList>
                {outline.map((o, i) => <OutlineRow key={i}><OutlineIcon />{o}</OutlineRow>)}
              </OutlineList>
            </DetailBody>
            <ScrollBar><ScrollCap><Chevron up /></ScrollCap><ScrollThumb /><ScrollCap><Chevron /></ScrollCap></ScrollBar>
          </Detail>
        </LeftCol>
        <CenterCol>
          <EditorHead $h={20}>
            <Pencil />编辑器 - D:\CodeTest\fisheriris-mlp\fisherIris_mpl_kfold.m
            <HeadRight><Circled /><HeadX>x</HeadX></HeadRight>
          </EditorHead>
          <EditorTabs>
            <Grip />
            <EdTab>fisherIris_mlp.m<TabClose>×</TabClose></EdTab>
            <EdTab $on>fisherIris_mpl_kfold.m</EdTab>
          </EditorTabs>
          <Code>
            <CodeBack>
              {code.map((l, i) => (
                <Line key={i}>
                  <LineNo>{i + 1}</LineNo>
                  <LineDash>{l.d && <DashMark />}</LineDash>
                  <FoldCell $kind={l.f} />
                  <CodeText><CodeClip>{l.t}</CodeClip></CodeText>
                </Line>
              ))}
            </CodeBack>
          </Code>
          <CmdHead>命令行窗口</CmdHead>
          <Cmd>
            <FxGutter><FxMark>fx</FxMark><FxCaret /></FxGutter>
            <CmdBody>
              {folds.map((v, i) => <div key={i}>{`Fold = ${i + 1} [Accuracy = ${v}%]`}</div>)}
              <div>network hit average (kfold = 10): 94.667%</div>
              <Prompt>&gt;&gt;</Prompt>
            </CmdBody>
          </Cmd>
        </CenterCol>
        <RightCol>
          <PanelHead $h={19}>工作区<HeadRight><Circled /></HeadRight></PanelHead>
          <WsTable>
            <WsHeader><WsCell /><span /></WsHeader>
            <WsValue>0]</WsValue>
          </WsTable>
        </RightCol>
      </Desk>
      <StatusBar>
        <StatusGrip>{[0, 1, 2, 3, 4].map(i => <GripBar key={i} />)}<GripCaret /></StatusGrip>
        <StatusCells>
          <StatusSlot />
          <StatusPos>行<PosVal>1</PosVal>列<PosVal>1</PosVal></StatusPos>
        </StatusCells>
        <Watermark>CSDN @qq1744828575</Watermark>
      </StatusBar>
      <ConfusionWindow />
      <TrainingWindow />
      <TopShade />
    </Screen>
  );
}
